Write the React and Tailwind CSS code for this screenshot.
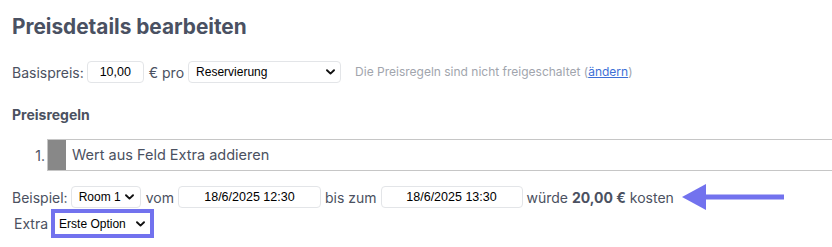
import React from "react";

function Chevron({ className = "" }) {
  return (
    <svg
      className={"pointer-events-none absolute top-1/2 -translate-y-1/2 " + className}
      width="9"
      height="6"
      viewBox="0 0 9 6"
      fill="none"
    >
      <path d="M1 1.2 L4.5 4.6 L8 1.2" stroke="#111" strokeWidth="1.9" strokeLinecap="round" strokeLinejoin="round" />
    </svg>
  );
}

function Select({ value, options, className = "", chevronClass = "right-[7px]", selectClass = "" }) {
  return (
    <span className={"relative inline-flex " + className}>
      <select
        defaultValue={value}
        className={
          "appearance-none w-full h-full bg-white text-[12px] text-black font-['Liberation_Sans',Arial,sans-serif] outline-none " +
          selectClass
        }
      >
        {options.map((o) => (
          <option key={o}>{o}</option>
        ))}
      </select>
      <Chevron className={chevronClass} />
    </span>
  );
}

function Input({ value, className = "" }) {
  return (
    <input
      readOnly
      value={value}
      className={
        "h-[22px] bg-white border border-[#e3e5e8] rounded-[4px] text-center text-[12.5px] text-black font-['Liberation_Sans',Arial,sans-serif] outline-none " +
        className
      }
    />
  );
}

export default function App() {
  return (
    <div className="w-[832px] h-[247px] overflow-hidden bg-white pl-3 pt-[13px] font-['Inter','Noto_Sans',sans-serif] text-[#4b5161]">
      <h1 className="text-[20.8px] leading-[28px] font-bold text-[#4a5162]">Preisdetails bearbeiten</h1>

      <div className="mt-[20px] flex items-center text-[14px] h-[22px]">
        <span>Basispreis:</span>
        <Input value="10,00" className="ml-[3px] w-[57px]" />
        <span className="ml-[5px]">€ pro</span>
        <Select
          value="Reservierung"
          options={["Reservierung", "Person", "Tag"]}
          className="ml-[4px] w-[153px] h-[22px]"
          chevronClass="right-[6px]"
          selectClass="border border-[#e3e5e8] rounded-[4px] pl-[7px] pr-[18px]"
        />
        <span className="ml-[14px] text-[12px] text-[#a1a5ad]">
          Die Preisregeln sind nicht freigeschaltet (
          <a href="#" className="text-[#3d6fd6] underline">ändern</a>)
        </span>
      </div>

      <h2 className="mt-[22px] text-[14px] leading-[20px] font-bold text-[#4b5161]">Preisregeln</h2>

      <div className="mt-[14px] flex items-stretch h-[32px]">
        <span className="w-[35px] pr-[2px] flex items-center justify-end text-[14px] text-[#4b5161]">1.</span>
        <div className="flex-1 flex items-stretch border-y border-l border-[#c6c6c6]">
          <div className="w-[18px] bg-[#888888]" />
          <div className="flex items-center pl-[6px] text-[14.5px] text-[#4b5161]">Wert aus Feld Extra addieren</div>
        </div>
      </div>

      <div className="mt-[15px] flex items-center text-[14px] h-[22px]">
        <span>Beispiel:</span>
        <Select
          value="Room 1"
          options={["Room 1", "Room 2"]}
          className="ml-[3px] w-[70px] h-[22px]"
          chevronClass="right-[7px]"
          selectClass="border border-[#e3e5e8] rounded-[4px] pl-[7px] pr-[16px]"
        />
        <span className="ml-[5px]">vom</span>
        <Input value="18/6/2025 12:30" className="ml-[4px] w-[143px]" />
        <span className="ml-[4px]">bis zum</span>
        <Input value="18/6/2025 13:30" className="ml-[4px] w-[142px]" />
        <span className="ml-[4px]">
          würde <b className="font-bold">20,00 €</b> kosten
        </span>
        <svg className="ml-[8px]" width="104" height="26" viewBox="0 0 104 26">
          <polygon points="0,13 24,0 24,26" fill="#7272ee" />
          <rect x="20" y="10.5" width="82" height="5" fill="#7272ee" />
        </svg>
      </div>

      <div className="mt-[1px] flex items-center text-[14px] h-[29px]">
        <span className="ml-[2px]">Extra</span>
        <span className="ml-[3px] h-[29px] w-[103px] border-[4px] border-[#7272ee] bg-white flex">
          <Select
            value="Erste Option"
            options={["Erste Option", "Zweite Option"]}
            className="w-full h-full"
            chevronClass="right-[5px]"
            selectClass="pl-[4px] pr-[14px]"
          />
        </span>
      </div>
    </div>
  );
}
